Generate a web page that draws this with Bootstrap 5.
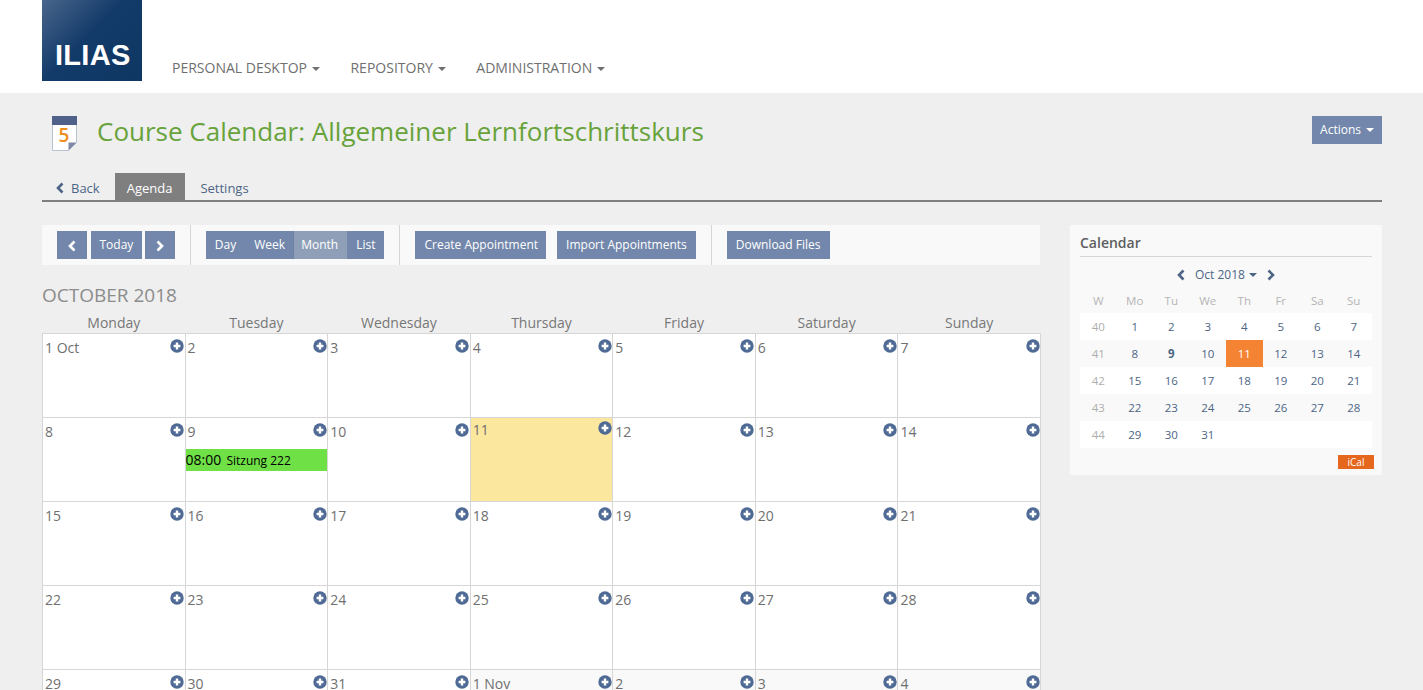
<!DOCTYPE html>
<html lang="en">
<head>
<meta charset="utf-8">
<title>Course Calendar</title>
<link rel="stylesheet" href="https://cdn.jsdelivr.net/npm/bootstrap@5.3.0/dist/css/bootstrap.min.css">
<style>
:root{--il-btn:#7287ab;--il-link:#4c6586;--il-text:#6f6f6f;--il-line:#d6d6d6;--il-panel:#f9f9f9;}
body{font-family:"Open Sans","Noto Sans",sans-serif;background:#efefef;color:var(--il-text);font-size:14px;line-height:20px;}
.il-top{height:93px;background:#fff;padding:0 42px;}
.il-logo{width:100px;height:81px;background:linear-gradient(135deg,#49668c 0%,#133b69 45%,#0f3764 100%);color:#fff;font-family:"Liberation Sans",Arial,sans-serif;font-weight:700;font-size:29px;letter-spacing:.3px;line-height:1;padding:0 0 11px 13px;}
.il-mainnav{margin:55px 0 0 15px;}
.il-mainnav .nav-link{color:#6f6f6f;font-size:14px;line-height:26px;padding:0 15px 0 15.5px;text-transform:uppercase;}
.il-mainnav .nav-link:first-child{padding-left:15px;}
.dropdown-toggle::after{margin-left:5px;border-top-width:4px;border-right-width:4px;border-left-width:4px;vertical-align:2px;}
.il-page{padding:0 41px 0 42px;}
.il-head{height:80px;padding-bottom:4px;}
.il-doc{margin:5px 20px 0 10px;}
.il-title{font-size:26px;line-height:36px;font-weight:400;color:#68a23b;margin:0;}
.il-btn{background:var(--il-btn);color:#fff;border:0;border-radius:0;font-size:12px;line-height:20px;padding:4px 9px;height:28px;white-space:nowrap;}
.il-btn:hover,.il-btn:focus{background:var(--il-btn);color:#fff;}
.il-btn.il-on{background:#8f9fb8;border-left:1px solid #6a80a5;padding:4px 9px 4px 7px;}
.il-btn.il-pr8{padding-right:8px;}
.il-btn.il-pr85{padding:4px 8.5px;}
.il-btn.il-pr10{padding-right:10px;}
.il-btn.il-tuck{margin-left:-1px;}
.il-actions{margin-bottom:2px;padding:4px 8px;}
.il-tabs{border-bottom:2px solid #7f7f7f;height:29px;margin-bottom:23px;}
.il-tabs a{display:block;height:27px;line-height:30px;padding:0 12px;color:var(--il-link);text-decoration:none;font-size:13px;}
.il-tabs .il-cur{background:#7f7f7f;color:#fff;padding-right:13px;}
.il-tabs .il-back{padding:0 15px 0 13px;}
.il-tabs .il-set{padding-left:15px;}
.il-back svg{margin-right:6px;vertical-align:-1px;}
.il-left{width:999px;flex:none;}
.il-right{width:312px;flex:none;margin-left:29px;}
.il-toolbar{height:40px;background:var(--il-panel);margin-right:1px;}
.il-grp{height:40px;padding:6px 15px;border-right:1px solid var(--il-line);}
.il-grp:last-child{border:0;}
.il-gap{gap:11px;}
.il-gap3{gap:4px;}
.il-square{width:30px;padding:0;}
.il-month{font-size:19px;line-height:24px;color:#8c8c8c;margin:18px 0 5px;font-weight:400;text-transform:uppercase;}
.il-cal{table-layout:fixed;width:999px;border-collapse:collapse;}
.il-cal th{font-weight:400;text-align:center;height:21px;padding:0;line-height:21px;color:#777;vertical-align:top;}
.il-cal td{height:84px;border:1px solid var(--il-line);background:#fff;vertical-align:top;padding:4px 0 0 2px;}
.il-cal td.il-today{background:#fce79f;padding-top:2px;}
.il-cal td.il-other{background:var(--il-panel);}
.il-plus{float:right;display:block;margin:1px .5px 0 0;}
.il-num{display:block;}
.il-event{background:#70e047;color:#000;height:22px;line-height:22px;margin:7px 0 0 -2px;font-size:12px;white-space:nowrap;}
.il-event b{font-weight:400;font-size:14px;margin-right:2px;}
.il-side{background:var(--il-panel);height:250px;padding:7px 10px 0;}
.il-side h3{font-size:14px;line-height:22px;font-weight:600;color:#5e5e5e;margin:0;padding-bottom:2px;border-bottom:1px solid var(--il-line);}
.il-minihead{height:35px;color:var(--il-link);font-size:12px;}
.il-minihead .il-mm{margin:0 9px;}
.il-minihead .dropdown-toggle::after{margin-left:4px;}
.il-mini{width:100%;table-layout:fixed;border-collapse:collapse;font-size:11.5px;text-align:center;}
.il-mini th{font-weight:400;color:#b5b5b5;height:21px;padding:1px 0 5px;line-height:15px;}
.il-mini td{height:27px;padding:0;color:var(--il-link);}
.il-mini tr.il-odd td{background:#fff;}
.il-mini td.il-wk{color:#aeaeae;}
.il-mini td.il-now{background:#f48333;color:#fff;}
.il-ical{background:#e5661d;color:#fff;font-size:10px;line-height:14px;height:14px;width:36px;text-align:center;margin:7px -2px 0 auto;}
</style>
</head>
<body class="vh-100 overflow-hidden">
<svg width="0" height="0" class="position-absolute">
  <symbol id="i-plus" viewBox="0 0 14 14"><circle cx="7" cy="7" r="6.7" fill="#4f6a94"/><path d="M7 3.6v6.8M3.6 7h6.8" stroke="#fff" stroke-width="2.4"/></symbol>
  <symbol id="i-left" viewBox="0 0 10 12"><path d="M7.5 1.5 3 6l4.5 4.5" fill="none" stroke="currentColor" stroke-width="2.6"/></symbol>
  <symbol id="i-right" viewBox="0 0 10 12"><path d="M2.5 1.5 7 6l-4.5 4.5" fill="none" stroke="currentColor" stroke-width="2.6"/></symbol>
</svg>

<header class="il-top d-flex align-items-start">
  <div class="il-logo d-flex align-items-end">ILIAS</div>
  <nav class="nav il-mainnav">
    <a class="nav-link dropdown-toggle" href="#">Personal Desktop</a>
    <a class="nav-link dropdown-toggle" href="#">Repository</a>
    <a class="nav-link dropdown-toggle" href="#">Administration</a>
  </nav>
</header>

<main class="il-page">
  <div class="il-head d-flex align-items-center">
    <svg class="il-doc" width="25" height="35" viewBox="0 0 25 35"><path d="M.5.5h24v26l-8 8H.5z" fill="#fff" stroke="#b9c2d3"/><rect x="0" y="0" width="25" height="9" fill="#4f6089"/><path d="M24.5 26.5h-8v8z" fill="#7f89a3"/><text x="12" y="26" text-anchor="middle" font-family="Open Sans" font-size="19" font-weight="600" fill="#ee8e1c">5</text></svg>
    <h1 class="il-title flex-grow-1">Course Calendar: Allgemeiner Lernfortschrittskurs</h1>
    <button class="btn il-btn il-actions dropdown-toggle" type="button">Actions</button>
  </div>

  <div class="il-tabs d-flex">
    <a class="il-back" href="#"><svg width="10" height="12"><use href="#i-left"/></svg>Back</a>
    <a class="il-cur" href="#">Agenda</a>
    <a class="il-set" href="#">Settings</a>
  </div>

  <div class="d-flex align-items-start">
    <div class="il-left">
      <div class="il-toolbar d-flex">
        <div class="il-grp d-flex il-gap3">
          <button class="btn il-btn il-square"><svg width="10" height="12"><use href="#i-left"/></svg></button>
          <button class="btn il-btn il-pr85">Today</button>
          <button class="btn il-btn il-square il-tuck"><svg width="10" height="12"><use href="#i-right"/></svg></button>
        </div>
        <div class="il-grp d-flex">
          <button class="btn il-btn">Day</button>
          <button class="btn il-btn il-pr8">Week</button>
          <button class="btn il-btn il-on">Month</button>
          <button class="btn il-btn">List</button>
        </div>
        <div class="il-grp d-flex il-gap">
          <button class="btn il-btn il-pr8">Create Appointment</button>
          <button class="btn il-btn">Import Appointments</button>
        </div>
        <div class="il-grp d-flex">
          <button class="btn il-btn il-pr10">Download Files</button>
        </div>
      </div>

      <h2 class="il-month">October 2018</h2>

      <table class="il-cal">
        <thead><tr><th>Monday</th><th>Tuesday</th><th>Wednesday</th><th>Thursday</th><th>Friday</th><th>Saturday</th><th>Sunday</th></tr></thead>
        <tbody>
          <tr>
            <td><svg class="il-plus" width="14" height="14"><use href="#i-plus"/></svg>1 Oct</td>
            <td><svg class="il-plus" width="14" height="14"><use href="#i-plus"/></svg>2</td>
            <td><svg class="il-plus" width="14" height="14"><use href="#i-plus"/></svg>3</td>
            <td><svg class="il-plus" width="14" height="14"><use href="#i-plus"/></svg>4</td>
            <td><svg class="il-plus" width="14" height="14"><use href="#i-plus"/></svg>5</td>
            <td><svg class="il-plus" width="14" height="14"><use href="#i-plus"/></svg>6</td>
            <td><svg class="il-plus" width="14" height="14"><use href="#i-plus"/></svg>7</td>
          </tr>
          <tr>
            <td><svg class="il-plus" width="14" height="14"><use href="#i-plus"/></svg>8</td>
            <td><svg class="il-plus" width="14" height="14"><use href="#i-plus"/></svg><span class="il-num">9</span><div class="il-event"><b>08:00</b> Sitzung 222</div></td>
            <td><svg class="il-plus" width="14" height="14"><use href="#i-plus"/></svg>10</td>
            <td class="il-today"><svg class="il-plus" width="14" height="14"><use href="#i-plus"/></svg>11</td>
            <td><svg class="il-plus" width="14" height="14"><use href="#i-plus"/></svg>12</td>
            <td><svg class="il-plus" width="14" height="14"><use href="#i-plus"/></svg>13</td>
            <td><svg class="il-plus" width="14" height="14"><use href="#i-plus"/></svg>14</td>
          </tr>
          <tr>
            <td><svg class="il-plus" width="14" height="14"><use href="#i-plus"/></svg>15</td>
            <td><svg class="il-plus" width="14" height="14"><use href="#i-plus"/></svg>16</td>
            <td><svg class="il-plus" width="14" height="14"><use href="#i-plus"/></svg>17</td>
            <td><svg class="il-plus" width="14" height="14"><use href="#i-plus"/></svg>18</td>
            <td><svg class="il-plus" width="14" height="14"><use href="#i-plus"/></svg>19</td>
            <td><svg class="il-plus" width="14" height="14"><use href="#i-plus"/></svg>20</td>
            <td><svg class="il-plus" width="14" height="14"><use href="#i-plus"/></svg>21</td>
          </tr>
          <tr>
            <td><svg class="il-plus" width="14" height="14"><use href="#i-plus"/></svg>22</td>
            <td><svg class="il-plus" width="14" height="14"><use href="#i-plus"/></svg>23</td>
            <td><svg class="il-plus" width="14" height="14"><use href="#i-plus"/></svg>24</td>
            <td><svg class="il-plus" width="14" height="14"><use href="#i-plus"/></svg>25</td>
            <td><svg class="il-plus" width="14" height="14"><use href="#i-plus"/></svg>26</td>
            <td><svg class="il-plus" width="14" height="14"><use href="#i-plus"/></svg>27</td>
            <td><svg class="il-plus" width="14" height="14"><use href="#i-plus"/></svg>28</td>
          </tr>
          <tr>
            <td><svg class="il-plus" width="14" height="14"><use href="#i-plus"/></svg>29</td>
            <td><svg class="il-plus" width="14" height="14"><use href="#i-plus"/></svg>30</td>
            <td><svg class="il-plus" width="14" height="14"><use href="#i-plus"/></svg>31</td>
            <td class="il-other"><svg class="il-plus" width="14" height="14"><use href="#i-plus"/></svg>1 Nov</td>
            <td class="il-other"><svg class="il-plus" width="14" height="14"><use href="#i-plus"/></svg>2</td>
            <td class="il-other"><svg class="il-plus" width="14" height="14"><use href="#i-plus"/></svg>3</td>
            <td class="il-other"><svg class="il-plus" width="14" height="14"><use href="#i-plus"/></svg>4</td>
          </tr>
        </tbody>
      </table>
    </div>

    <aside class="il-right il-side">
      <h3>Calendar</h3>
      <div class="il-minihead d-flex align-items-center justify-content-center">
        <svg width="10" height="12"><use href="#i-left"/></svg>
        <span class="il-mm dropdown-toggle">Oct 2018</span>
        <svg width="10" height="12"><use href="#i-right"/></svg>
      </div>
      <table class="il-mini">
        <thead><tr><th>W</th><th>Mo</th><th>Tu</th><th>We</th><th>Th</th><th>Fr</th><th>Sa</th><th>Su</th></tr></thead>
        <tbody>
          <tr class="il-odd"><td class="il-wk">40</td><td>1</td><td>2</td><td>3</td><td>4</td><td>5</td><td>6</td><td>7</td></tr>
          <tr><td class="il-wk">41</td><td>8</td><td class="fw-bold">9</td><td>10</td><td class="il-now">11</td><td>12</td><td>13</td><td>14</td></tr>
          <tr class="il-odd"><td class="il-wk">42</td><td>15</td><td>16</td><td>17</td><td>18</td><td>19</td><td>20</td><td>21</td></tr>
          <tr><td class="il-wk">43</td><td>22</td><td>23</td><td>24</td><td>25</td><td>26</td><td>27</td><td>28</td></tr>
          <tr class="il-odd"><td class="il-wk">44</td><td>29</td><td>30</td><td>31</td><td></td><td></td><td></td><td></td></tr>
        </tbody>
      </table>
      <div class="il-ical">iCal</div>
    </aside>
  </div>
</main>
<script src="https://cdn.jsdelivr.net/npm/bootstrap@5.3.0/dist/js/bootstrap.bundle.min.js"></script>
</body>
</html>
